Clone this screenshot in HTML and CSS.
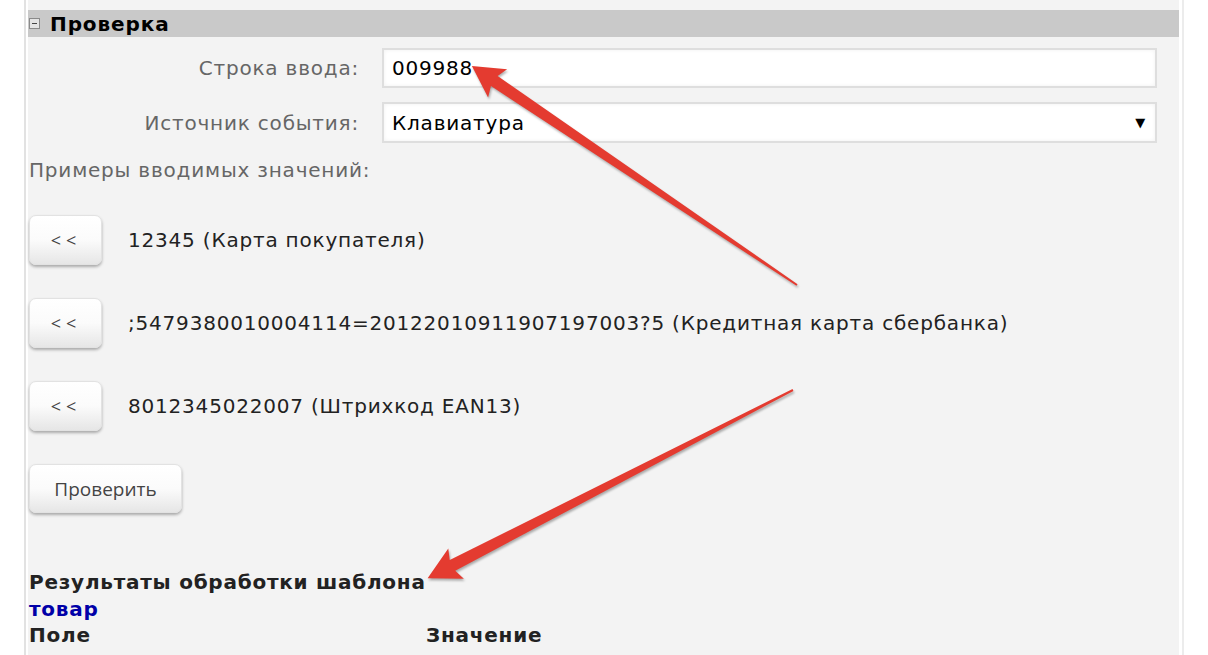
FILE: index.html
```html
<!DOCTYPE html>
<html>
<head>
  <title>Проверка</title>
  <link rel="stylesheet" href="styles.css">
</head>
<body>
  <div class="frame">
    <div class="panel">
      <div class="section-title">
        <span class="toggle"></span>
        <span>Проверка</span>
      </div>

      <div class="form-row">
        <label class="form-label">Строка ввода:</label>
        <div class="field">009988</div>
      </div>
      <div class="form-row">
        <label class="form-label">Источник события:</label>
        <div class="field select">
          <span>Клавиатура</span>
          <span class="caret">&#9660;</span>
        </div>
      </div>

      <div class="examples-title">Примеры вводимых значений:</div>

      <div class="example">
        <button class="btn btn-small">&lt;&lt;</button>
        <span>12345 (Карта покупателя)</span>
      </div>
      <div class="example">
        <button class="btn btn-small">&lt;&lt;</button>
        <span>;5479380010004114=20122010911907197003?5 (Кредитная карта сбербанка)</span>
      </div>
      <div class="example">
        <button class="btn btn-small">&lt;&lt;</button>
        <span>8012345022007 (Штрихкод EAN13)</span>
      </div>

      <button class="btn btn-check">Проверить</button>

      <div class="results">
        <div class="results-title">Результаты обработки шаблона</div>
        <div class="entity">товар</div>
        <div class="results-head">
          <span class="col-field">Поле</span>
          <span>Значение</span>
        </div>
      </div>
    </div>
  </div>

  <!-- annotation arrows -->
  <svg class="arrows" width="1208" height="655">
    <g transform="translate(797 285) rotate(-146.03)">
      <polygon points="0,-1 365,-6 361,-17 392,0 361,17 365,6 0,1"/>
    </g>
    <g transform="translate(793 390) rotate(152.75)">
      <polygon points="0,-1 383,-6 379,-17 411,0 379,17 383,6 0,1"/>
    </g>
  </svg>
</body>
</html>
```

FILE: styles.css
```css
* {
    box-sizing: border-box;
}

body {
    margin: 0;
    background: white;
    font-family: "DejaVu Sans", Verdana, sans-serif;
    font-size: 20px;
    letter-spacing: 0.8px;
    color: #222;
}

.frame {
    margin-left: 24px;
    width: 1160px;
    height: 655px;
    border-left: 2px solid #e2e2e2;
    border-right: 2px solid #ececec;
    padding: 0 3px 0 2px;
    overflow: hidden;
}

.panel {
    background: #f3f3f3;
    height: 100%;
    padding-top: 10px;
}

.section-title {
    display: flex;
    align-items: center;
    height: 27px;
    background: #c9c9c9;
    font-weight: bold;
    color: #000;
    letter-spacing: 0.9px;
}

.toggle {
    width: 11px;
    height: 11px;
    margin: 0 10px 0 1px;
    border: 1px solid #8a8a8a;
    background: #e4e4e4;
    position: relative;
}

.toggle::after {
    content: '';
    position: absolute;
    left: 2px;
    right: 2px;
    top: 4px;
    height: 1px;
    background: #444;
}

.form-row {
    display: flex;
    align-items: center;
    margin-top: 11px;
}

.form-row + .form-row {
    margin-top: 14px;
}

.form-label {
    width: 331px;
    text-align: right;
    color: #666;
    margin-right: 23px;
}

.field {
    width: 775px;
    height: 40px;
    background: white;
    border: 2px solid #dedede;
    box-shadow: inset 0 0 4px rgba(0, 0, 0, 0.06);
    padding: 0 8px;
    display: flex;
    align-items: center;
    color: #000;
}

.select {
    height: 41px;
    justify-content: space-between;
}

.caret {
    font-size: 13px;
    margin-right: 1px;
}

.examples-title {
    color: #666;
    margin: 15px 0 0 1px;
}

.example {
    display: flex;
    align-items: center;
    margin-top: 33px;
}

.example:first-of-type {
    margin-top: 40px;
}

.example span {
    margin-left: 26px;
}

.btn {
    font-family: "Open Sans", sans-serif;
    letter-spacing: 0;
    background: linear-gradient(#ffffff 0%, #fbfbfb 50%, #e6e6e6 100%);
    border: 1px solid #e2e2e2;
    border-radius: 7px;
    box-shadow: 0 2px 3px rgba(0, 0, 0, 0.3);
    color: #444;
    cursor: pointer;
    margin-left: 1px;
}

.btn-small {
    width: 73px;
    height: 50px;
    font-size: 18px;
    letter-spacing: 5px;
    padding-left: 7px;
}

.btn-check {
    display: block;
    width: 153px;
    height: 49px;
    margin-top: 33px;
    font-size: 19px;
}

.results {
    margin: 56px 0 0 1px;
    font-weight: bold;
    line-height: 26.5px;
    letter-spacing: 0.75px;
}

.entity {
    color: #0000a8;
}

.results-head {
    display: flex;
}

.col-field {
    width: 397px;
}

.arrows {
    position: absolute;
    left: 0;
    top: 0;
    pointer-events: none;
    fill: #e43b30;
    filter: drop-shadow(1px 2px 1px rgba(0, 0, 0, 0.3));
}
```
